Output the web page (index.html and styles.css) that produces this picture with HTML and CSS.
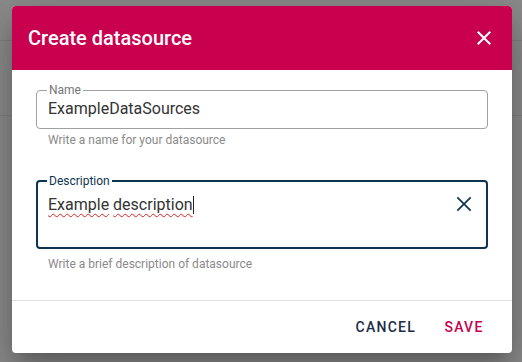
FILE: index.html
```html
<!DOCTYPE html>
<html>
<head>
<meta charset="utf-8">
<link rel="stylesheet" href="styles.css">
</head>
<body>
<div class="page">
  <div class="appbar"></div>
  <div class="row"></div>
</div>
<div class="dialog">
  <div class="dlg-header">
    <h2 class="dlg-title">Create datasource</h2>
    <svg class="dlg-close" viewBox="0 0 24 24" width="24" height="24"><path fill="#fff" d="M19 6.41L17.59 5 12 10.59 6.41 5 5 6.41 10.59 12 5 17.59 6.41 19 12 13.41 17.59 19 19 17.59 13.41 12z"/></svg>
  </div>
  <div class="dlg-body">
    <fieldset class="field">
      <legend class="field-label">Name</legend>
      <div class="field-value">ExampleDataSources</div>
    </fieldset>
    <div class="helper helper-name">Write a name for your datasource</div>
    <fieldset class="field field-focused">
      <legend class="field-label">Description</legend>
      <div class="field-row">
        <div class="field-value"><span class="misspelled">Example</span> <span class="misspelled">description</span><span class="caret"></span></div>
        <svg class="clear-icon" viewBox="0 0 24 24" width="24" height="24"><path fill="none" stroke="#0d3451" stroke-width="1.7" d="M5.3 5.3L18.7 18.7M18.7 5.3L5.3 18.7"/></svg>
      </div>
    </fieldset>
    <div class="helper helper-desc">Write a brief description of datasource</div>
  </div>
  <div class="dlg-actions">
    <button class="btn btn-cancel">Cancel</button>
    <button class="btn btn-save">Save</button>
  </div>
</div>
</body>
</html>
```
FILE: styles.css
```css
html, body {
  margin: 0;
  padding: 0;
}
body {
  background: #8b8b8b;
  width: 522px;
  height: 362px;
  overflow: hidden;
  font-family: Roboto, "Liberation Sans", sans-serif;
}
.page {
  display: flex;
  flex-direction: column;
}
.appbar {
  height: 40px;
  border-bottom: 1px solid #7f7f7f;
}
.row {
  height: 74px;
  border-bottom: 1px solid #7f7f7f;
}
.dialog {
  position: absolute;
  left: 12px;
  top: 6px;
  width: 500px;
  height: 347px;
  background: #fff;
  border-radius: 4px;
  overflow: hidden;
  display: flex;
  flex-direction: column;
  box-shadow: 0 11px 15px -7px rgba(0,0,0,.2), 0 24px 38px 3px rgba(0,0,0,.14), 0 9px 46px 8px rgba(0,0,0,.12);
}
.dlg-header {
  height: 64px;
  background: #c8004e;
  display: flex;
  align-items: center;
  justify-content: space-between;
  padding: 0 16px;
  flex: none;
}
.dlg-title {
  margin: 0;
  color: #fff;
  font-size: 20px;
  font-weight: 500;
}
.dlg-close {
  display: block;
}
.dlg-body {
  flex: 1;
  padding: 14px 24px 0;
}
.field {
  margin: 0;
  border: 1px solid #a0a0a0;
  border-radius: 4px;
  padding: 0 11px 7px;
}
.field-label {
  font-size: 12px;
  line-height: 12px;
  color: #757575;
  padding: 0 2px;
  margin-left: -1px;
}
.field-value {
  font-size: 16px;
  line-height: 24px;
  color: #333;
  margin-top: 1px;
}
.helper {
  font-size: 12px;
  line-height: 16px;
  color: #8a8a8a;
  padding-left: 12px;
}
.helper-name {
  margin-top: 3px;
  margin-bottom: 27px;
}
.field-focused {
  border: 2px solid #0d3451;
  padding: 0 10px 30px;
}
.field-focused .field-label {
  color: #0d3451;
}
.field-row {
  display: flex;
  align-items: flex-start;
}
.field-row .field-value {
  flex: 1;
  margin-top: 6px;
}
.misspelled {
  text-decoration: underline wavy #e02020;
  text-decoration-thickness: 1px;
  text-underline-offset: 3px;
}
.caret {
  display: inline-block;
  width: 1px;
  height: 18px;
  background: #222;
  vertical-align: -4px;
}
.clear-icon {
  display: block;
  margin-top: 5px;
  flex: none;
}
.helper-desc {
  margin-top: 7px;
}
.dlg-actions {
  flex: none;
  border-top: 1px solid #e0e0e0;
  padding: 8px 16px 8px;
  display: flex;
  justify-content: flex-end;
  gap: 8px;
}
.btn {
  height: 36px;
  min-width: 64px;
  padding: 0 8px;
  border: none;
  background: none;
  font-family: Roboto, "Liberation Sans", sans-serif;
  font-size: 14px;
  font-weight: 500;
  letter-spacing: 1.25px;
  text-transform: uppercase;
}
.btn-cancel {
  color: #1b2c45;
}
.btn-save {
  color: #c8004e;
}
```
